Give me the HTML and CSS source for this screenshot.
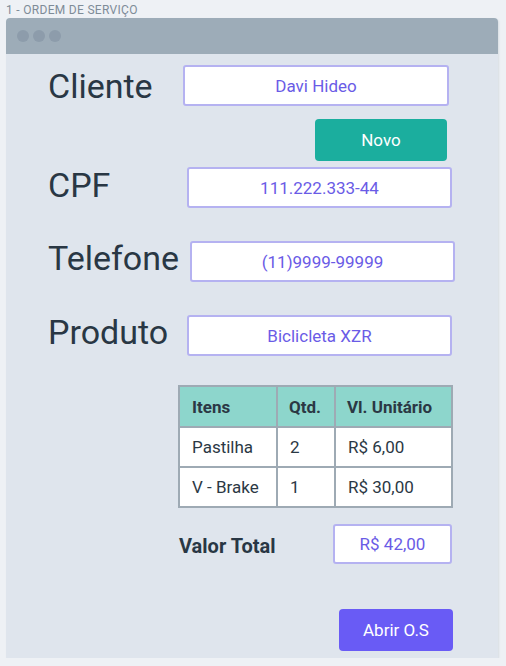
FILE: index.html
```html
<!DOCTYPE html>
<html lang="pt-BR">
<head>
<meta charset="utf-8">
<title>Ordem de Serviço</title>
<link rel="stylesheet" href="styles.css">
</head>
<body>
<div class="caption">1 - ORDEM DE SERVIÇO</div>
<div class="window">
  <div class="titlebar">
    <span class="dot"></span><span class="dot"></span><span class="dot"></span>
  </div>
  <div class="content">
    <div class="field field--cliente">
      <span class="label">Cliente</span>
      <div class="input">Davi Hideo</div>
    </div>
    <div class="novo-row">
      <div class="btn btn--novo">Novo</div>
    </div>
    <div class="field field--cpf">
      <span class="label">CPF</span>
      <div class="input">111.222.333-44</div>
    </div>
    <div class="field field--tel">
      <span class="label">Telefone</span>
      <div class="input">(11)9999-99999</div>
    </div>
    <div class="field field--prod">
      <span class="label">Produto</span>
      <div class="input">Biclicleta XZR</div>
    </div>
    <table class="items">
      <thead>
        <tr><th class="c1">Itens</th><th class="c2">Qtd.</th><th class="c3">Vl. Unitário</th></tr>
      </thead>
      <tbody>
        <tr><td>Pastilha</td><td>2</td><td>R$ 6,00</td></tr>
        <tr><td>V - Brake</td><td>1</td><td>R$ 30,00</td></tr>
      </tbody>
    </table>
    <div class="total">
      <span class="total-label">Valor Total</span>
      <div class="input input--total">R$ 42,00</div>
    </div>
    <div class="action-row">
      <div class="btn btn--abrir">Abrir O.S</div>
    </div>
  </div>
</div>
</body>
</html>
```
FILE: styles.css
```css
* { box-sizing: border-box; }

body {
  margin: 0;
  background: #eef1f5;
  font-family: Roboto, "Liberation Sans", sans-serif;
  color: #293744;
}

.caption {
  height: 18px;
  padding: 4px 0 0 6px;
  font-size: 12px;
  line-height: 12px;
  color: #7e8c98;
  letter-spacing: 0.3px;
}

.window {
  width: 492px;
  margin-left: 6px;
  border-radius: 4px 4px 0 0;
  overflow: hidden;
  box-shadow: 1px 1px 2px rgba(60, 80, 100, 0.12);
}

.titlebar {
  height: 36px;
  background: #9dacb8;
  display: flex;
  align-items: center;
  gap: 4px;
  padding-left: 11px;
}

.dot {
  width: 12px;
  height: 12px;
  border-radius: 50%;
  background: #8d9cab;
}

.content {
  height: 604px;
  background: #dfe5ed;
  padding: 11px 0 0 42px;
  display: flex;
  flex-direction: column;
}

.field {
  display: flex;
  align-items: center;
  height: 41px;
}

.label {
  width: 135px;
  font-size: 34px;
  line-height: 40px;
  color: #293744;
}

.input {
  width: 266px;
  height: 41px;
  background: #fff;
  border: 2px solid #b5b2f1;
  border-radius: 3px;
  display: flex;
  align-items: center;
  justify-content: center;
  font-size: 17px;
  color: #6a5be6;
}

.field--cpf { margin-top: 6px; }
.field--cpf .input { margin-left: 4px; width: 265px; }
.field--cpf .label { margin-bottom: 6px; }
.field--tel { margin-top: 33px; }
.field--tel .input { margin-left: 7px; width: 265px; }
.field--tel .label { margin-bottom: 8px; }
.field--prod { margin-top: 33px; }
.field--prod .input { margin-left: 4px; width: 265px; }
.field--prod .label { margin-bottom: 8px; }

.novo-row {
  display: flex;
  margin-top: 13px;
  padding-left: 267px;
}

.btn {
  height: 42px;
  border-radius: 4px;
  display: flex;
  align-items: center;
  justify-content: center;
  color: #fff;
  font-size: 17px;
}

.btn--novo {
  width: 132px;
  background: #1bae9e;
}

.items {
  margin-top: 29px;
  margin-left: 130px;
  border-collapse: collapse;
  table-layout: fixed;
  width: 273px;
  background: #fff;
  border: 2px solid #9eaab4;
}

.items th,
.items td {
  border: 2px solid #9eaab4;
  text-align: left;
  padding: 0 0 0 12px;
  font-size: 17px;
  color: #2b3844;
}

.items th {
  background: #8dd6cc;
  font-weight: 700;
  height: 41px;
}

.items td { height: 40px; }

.items .c1 { width: 98px; }
.items .c2 { width: 58px; padding-left: 11px; }
.items .c3 { width: 117px; padding-left: 11px; }

.total {
  display: flex;
  align-items: center;
  margin-top: 16px;
  height: 40px;
}

.total-label {
  width: 154px;
  margin-left: 131px;
  margin-top: 4px;
  font-size: 20px;
  font-weight: 700;
  color: #293744;
}

.input--total {
  width: 119px;
  height: 40px;
}

.action-row {
  display: flex;
  margin-top: 45px;
  padding-left: 291px;
}

.btn--abrir {
  width: 114px;
  background: #695bf5;
}
```
